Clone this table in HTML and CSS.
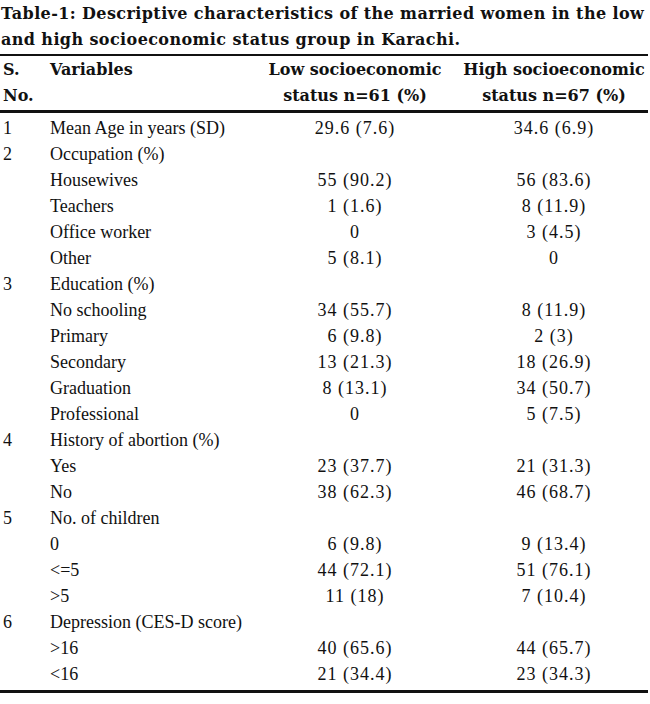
FILE: index.html
```html
<!DOCTYPE html>
<html lang="en">
<head>
<meta charset="utf-8">
<title>Table-1</title>
<link rel="stylesheet" href="styles.css">
</head>
<body>
<div class="page">
  <p class="caption">Table-1: Descriptive characteristics of the married women in the low and high socioeconomic status group in Karachi.</p>
  <table class="data">
    <colgroup>
      <col class="c-no"><col class="c-var"><col class="c-low"><col class="c-high">
    </colgroup>
    <thead>
      <tr>
        <th class="no">S.<br>No.</th>
        <th class="var">Variables</th>
        <th class="num">Low socioeconomic<br>status n=61 (%)</th>
        <th class="num hi">High socioeconomic<br>status n=67 (%)</th>
      </tr>
    </thead>
    <tbody>
      <tr><td class="no">1</td><td>Mean Age in years (SD)</td><td class="num">29.6 (7.6)</td><td class="num hi">34.6 (6.9)</td></tr>
      <tr><td class="no">2</td><td>Occupation (%)</td><td class="num"></td><td class="num hi"></td></tr>
      <tr><td class="no"></td><td>Housewives</td><td class="num">55 (90.2)</td><td class="num hi">56 (83.6)</td></tr>
      <tr><td class="no"></td><td>Teachers</td><td class="num">1 (1.6)</td><td class="num hi">8 (11.9)</td></tr>
      <tr><td class="no"></td><td>Office worker</td><td class="num">0</td><td class="num hi">3 (4.5)</td></tr>
      <tr><td class="no"></td><td>Other</td><td class="num">5 (8.1)</td><td class="num hi">0</td></tr>
      <tr><td class="no">3</td><td>Education (%)</td><td class="num"></td><td class="num hi"></td></tr>
      <tr><td class="no"></td><td>No schooling</td><td class="num">34 (55.7)</td><td class="num hi">8 (11.9)</td></tr>
      <tr><td class="no"></td><td>Primary</td><td class="num">6 (9.8)</td><td class="num hi">2 (3)</td></tr>
      <tr><td class="no"></td><td>Secondary</td><td class="num">13 (21.3)</td><td class="num hi">18 (26.9)</td></tr>
      <tr><td class="no"></td><td>Graduation</td><td class="num">8 (13.1)</td><td class="num hi">34 (50.7)</td></tr>
      <tr><td class="no"></td><td>Professional</td><td class="num">0</td><td class="num hi">5 (7.5)</td></tr>
      <tr><td class="no">4</td><td>History of abortion (%)</td><td class="num"></td><td class="num hi"></td></tr>
      <tr><td class="no"></td><td>Yes</td><td class="num">23 (37.7)</td><td class="num hi">21 (31.3)</td></tr>
      <tr><td class="no"></td><td>No</td><td class="num">38 (62.3)</td><td class="num hi">46 (68.7)</td></tr>
      <tr><td class="no">5</td><td>No. of children</td><td class="num"></td><td class="num hi"></td></tr>
      <tr><td class="no"></td><td>0</td><td class="num">6 (9.8)</td><td class="num hi">9 (13.4)</td></tr>
      <tr><td class="no"></td><td>&lt;=5</td><td class="num">44 (72.1)</td><td class="num hi">51 (76.1)</td></tr>
      <tr><td class="no"></td><td>&gt;5</td><td class="num">11 (18)</td><td class="num hi">7 (10.4)</td></tr>
      <tr><td class="no">6</td><td>Depression (CES-D score)</td><td class="num"></td><td class="num hi"></td></tr>
      <tr><td class="no"></td><td>&gt;16</td><td class="num">40 (65.6)</td><td class="num hi">44 (65.7)</td></tr>
      <tr><td class="no"></td><td>&lt;16</td><td class="num">21 (34.4)</td><td class="num hi">23 (34.3)</td></tr>
    </tbody>
  </table>
</div>
</body>
</html>
```

FILE: styles.css
```css
html, body {
  margin: 0;
  padding: 0;
  background: #ffffff;
}

.page {
  width: 650px;
  color: #111111;
  font-family: "Liberation Serif", "Times New Roman", serif;
}

.caption {
  margin: 0;
  padding: 1px 0 0 1px;
  font-family: "DejaVu Serif", serif;
  font-weight: bold;
  font-size: 16px;
  letter-spacing: 0.4px;
  line-height: 26px;
  height: 53px;
}

.data {
  width: 648px;
  border-collapse: collapse;
  table-layout: fixed;
  font-size: 18px;
}

.c-no { width: 50px; }
.c-var { width: 210px; }
.c-low { width: 190px; }
.c-high { width: 198px; }

.data thead tr {
  border-top: 2px solid #111111;
  border-bottom: 3px solid #111111;
}

.data th {
  font-family: "DejaVu Serif", serif;
  font-weight: bold;
  font-size: 16px;
  line-height: 26px;
  padding: 1px 0 1px;
  vertical-align: top;
  text-align: left;
  white-space: nowrap;
}

.data td {
  line-height: 26px;
  padding: 0;
  height: 26px;
}

.data tbody tr:first-child td {
  padding-top: 2px;
}

.data tbody tr:last-child {
  border-bottom: 3px solid #111111;
}

.data tbody tr:last-child td {
  padding-bottom: 3px;
}

.no {
  padding-left: 3px !important;
}

.data th.num,
.data td.num {
  text-align: center;
}

.data td.num {
  letter-spacing: 1px;
}

.data .hi {
  padding-left: 10px;
}
```
